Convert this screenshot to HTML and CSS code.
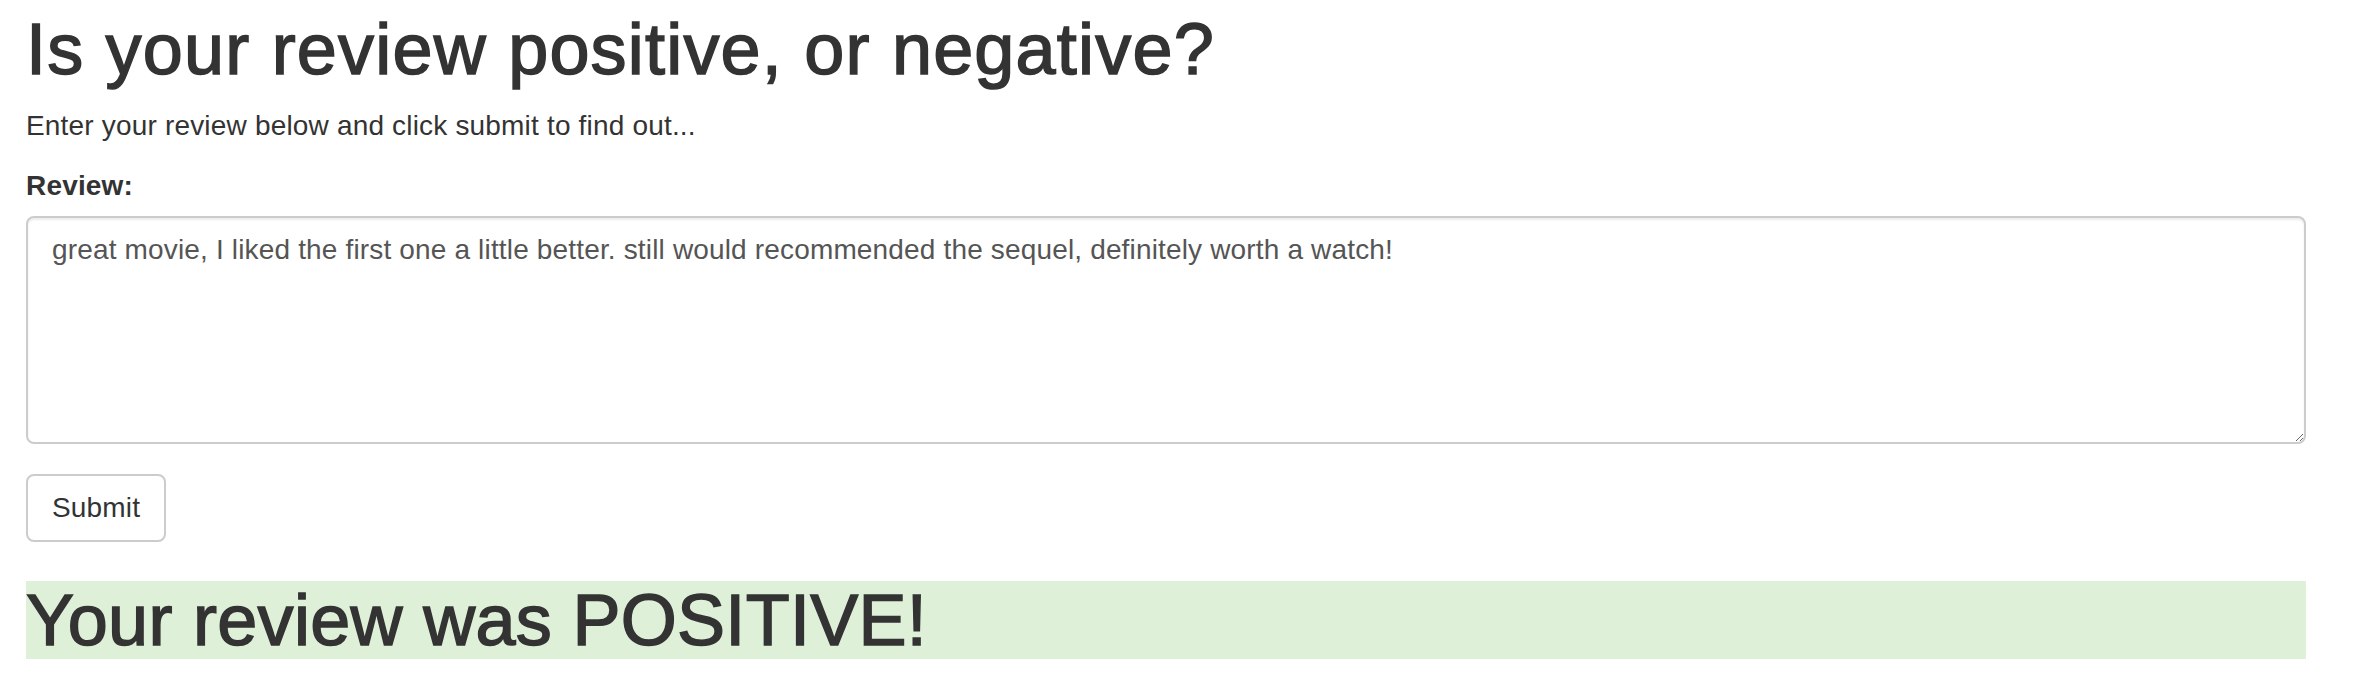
FILE: index.html
```html
<!DOCTYPE html>
<html lang="en">
<head>
<meta charset="utf-8">
<title>Review Sentiment</title>
<link rel="stylesheet" href="styles.css">
</head>
<body>
<div class="container">
  <h1 class="title">Is your review positive, or negative?</h1>
  <p class="intro">Enter your review below and click submit to find out...</p>
  <form class="review-form">
    <div class="form-group">
      <label class="field-label" for="review">Review:</label>
      <textarea id="review" class="form-control" rows="5">great movie, I liked the first one a little better. still would recommended the sequel, definitely worth a watch!</textarea>
    </div>
    <button type="button" class="btn">Submit</button>
  </form>
  <h1 class="result">Your review was POSITIVE!</h1>
</div>
</body>
</html>
```

FILE: styles.css
```css
html, body {
  margin: 0;
  padding: 0;
  background: #fff;
}

body {
  font-family: "Liberation Sans", Arial, Helvetica, sans-serif;
  font-size: 28px;
  line-height: 40px;
  letter-spacing: 0.18px;
  color: #333;
}

.container {
  width: 2280px;
  padding-left: 26px;
}

.title {
  margin: 10px 0 17px;
  font-size: 72px;
  line-height: 79px;
  font-weight: 400;
  letter-spacing: 1.2px;
  -webkit-text-stroke: 1.5px #333;
}

.intro {
  margin: 0 0 20px;
}

.review-form {
  margin: 0;
}

.form-group {
  margin-bottom: 30px;
}

.field-label {
  display: inline-block;
  margin-bottom: 10px;
  font-weight: 700;
}

.form-control {
  display: block;
  box-sizing: border-box;
  width: 100%;
  height: 228px;
  margin: 0;
  padding: 12px 24px;
  border: 2px solid #ccc;
  border-radius: 8px;
  background: #fff;
  box-shadow: inset 0 2px 2px rgba(0, 0, 0, 0.075);
  font-family: inherit;
  font-size: 28px;
  line-height: 40px;
  letter-spacing: 0.16px;
  color: #555;
  resize: vertical;
}

.btn {
  display: inline-block;
  box-sizing: border-box;
  height: 68px;
  margin: 0;
  padding: 12px 24px;
  border: 2px solid #ccc;
  border-radius: 8px;
  background: #fff;
  font-family: inherit;
  font-size: 28px;
  line-height: 40px;
  letter-spacing: 0.18px;
  color: #333;
  cursor: pointer;
}

.result {
  margin: 39px 0 20px;
  background: #dff0d8;
  font-size: 72px;
  line-height: 78px;
  font-weight: 400;
  letter-spacing: 0.3px;
  -webkit-text-stroke: 1.5px #333;
}
```
